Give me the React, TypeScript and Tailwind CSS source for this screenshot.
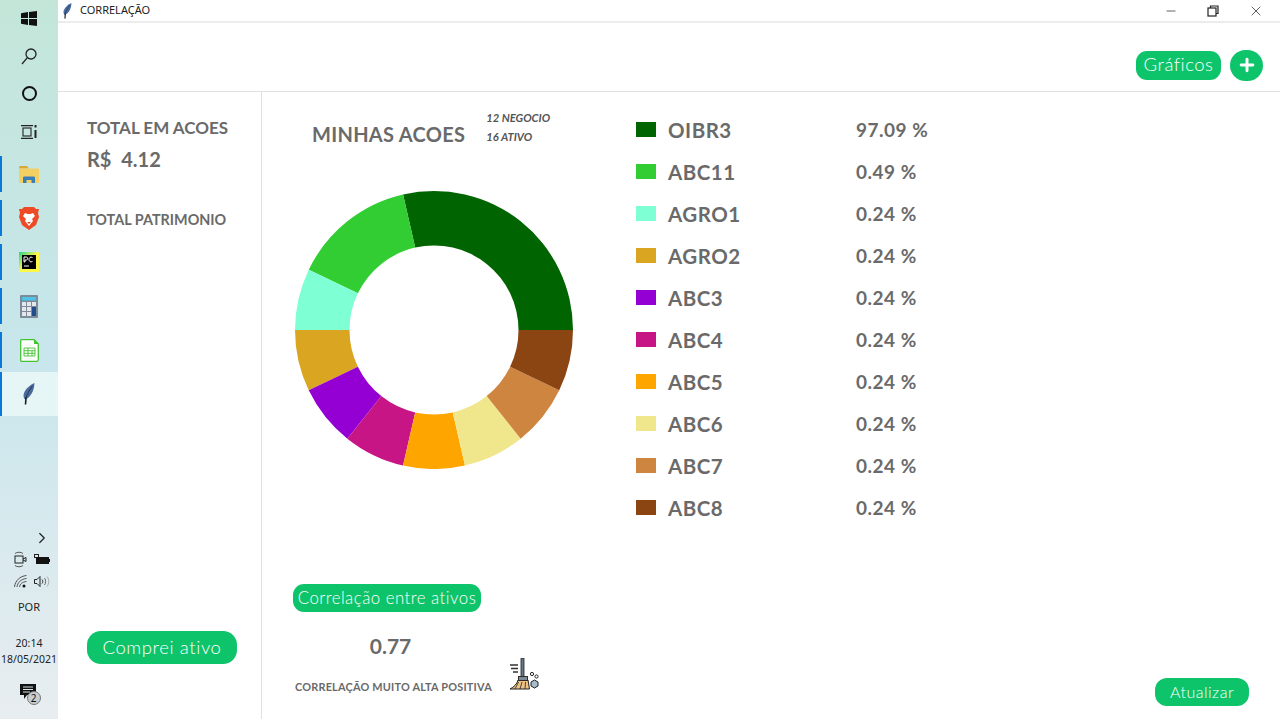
import { ReactNode } from 'react'
import { ChevronRight, Minus, Plus, X } from 'lucide-react'

const stocks = [
  { name: 'OIBR3', pct: '97.09 %', color: '#006400', units: 4 },
  { name: 'ABC11', pct: '0.49 %', color: '#32cd32', units: 2 },
  { name: 'AGRO1', pct: '0.24 %', color: '#7fffd4', units: 1 },
  { name: 'AGRO2', pct: '0.24 %', color: '#daa520', units: 1 },
  { name: 'ABC3', pct: '0.24 %', color: '#9400d3', units: 1 },
  { name: 'ABC4', pct: '0.24 %', color: '#c71585', units: 1 },
  { name: 'ABC5', pct: '0.24 %', color: '#ffa500', units: 1 },
  { name: 'ABC6', pct: '0.24 %', color: '#f0e68c', units: 1 },
  { name: 'ABC7', pct: '0.24 %', color: '#cd853f', units: 1 },
  { name: 'ABC8', pct: '0.24 %', color: '#8b4513', units: 1 },
]

function Feather({ width = 12, height = 22 }: { width?: number; height?: number }) {
  return (
    <svg width={width} height={height} viewBox="0 0 12 22">
      <path d="M11.500 0C7 2 2.500 6 1 10c-.8 2.500-.5 4.500.5 6 1.500.2 3-.5 4.500-2 3-3 5-7 5.500-14z" fill="#4a6a9c" />
      <path d="M9.500 3C6.500 7 4 11 3 15" stroke="#24385c" strokeWidth="1" fill="none" />
      <path d="M3 14.500L2.500 21.500" stroke="#1c1c1c" strokeWidth="1.600" />
    </svg>
  )
}

function WindowsLogo() {
  return (
    <svg width="16" height="15" viewBox="0 0 16 15" fill="#111">
      <path d="M0 2.200L7 1v6H0zM8 .9L16 0v7H8zM0 8h7v6L0 12.800zM8 8h8v7l-8-1z" />
    </svg>
  )
}

function SearchGlass() {
  return (
    <svg width="16" height="17" viewBox="0 0 16 17" fill="none" stroke="#222" strokeWidth="1.300">
      <circle cx="10" cy="6" r="5" />
      <path d="M6.400 9.600L1 16" />
    </svg>
  )
}

function TaskView() {
  return (
    <svg width="17" height="14" viewBox="0 0 17 14" fill="none" stroke="#222" strokeWidth="1.100">
      <path d="M0 .6h12M0 13.400h12" />
      <rect x="2" y="3" width="8" height="8" />
      <path d="M14.500 0v2.500M14.500 5v8" strokeWidth="2" />
    </svg>
  )
}

function FolderIcon() {
  return (
    <svg width="20" height="17" viewBox="0 0 20 17">
      <path d="M0 1.500C0 .7.700 0 1.500 0H8l2 2.500H0z" fill="#d8a63a" />
      <rect x="0" y="2.500" width="20" height="14.500" rx="1" fill="#f4cf63" />
      <path d="M4 17v-5c0-1 .5-1.500 1.500-1.500h9c1 0 1.500.5 1.500 1.500v5h-3.500v-3h-5v3z" fill="#3a7fb8" />
    </svg>
  )
}

function BraveIcon() {
  return (
    <svg width="20" height="23" viewBox="0 0 20 23">
      <path d="M5 0h10l2 2 3 0-1 4 1 4-3 8-7 5-7-5-3-8 1-4-1-4 3 0z" fill="#ee4a25" />
      <path d="M6 6l2.500 1h3L14 6l2 3-3 3 1 2-4 5-4-5 1-2-3-3z" fill="#fff" />
      <path d="M8 15h4l-2 2z" fill="#ee4a25" />
    </svg>
  )
}

function PyCharmIcon() {
  return (
    <svg width="20" height="20" viewBox="0 0 20 20">
      <defs>
        <linearGradient id="pc" x1="0" y1="0" x2="1" y2="1">
          <stop offset="0" stopColor="#21d789" />
          <stop offset="0.5" stopColor="#fcf84a" />
          <stop offset="1" stopColor="#fcf84a" />
        </linearGradient>
      </defs>
      <rect width="20" height="20" fill="url(#pc)" />
      <rect x="3" y="3" width="14" height="14" fill="#000" />
      <path d="M5 5h2.500c1.500 0 1.500 3 0 3H6v2H5zM13.500 5.500c-2-1-3.500 0-3.500 2s1.500 3 3.500 2" stroke="#fff" fill="none" strokeWidth="1" />
      <path d="M5 14h5" stroke="#fff" strokeWidth="1" />
    </svg>
  )
}

function CalculatorIcon() {
  return (
    <svg width="18" height="23" viewBox="0 0 18 23">
      <rect width="18" height="23" rx="1" fill="#7d8a99" />
      <rect x="2" y="2" width="14" height="3.500" fill="#4fc3e8" />
      <g fill="#e4e8ec">
        <rect x="2" y="7" width="4" height="4" />
        <rect x="7" y="7" width="4" height="4" />
        <rect x="12" y="7" width="4" height="4" />
        <rect x="2" y="12" width="4" height="4" />
        <rect x="7" y="12" width="4" height="4" />
        <rect x="2" y="17" width="4" height="4" />
        <rect x="7" y="17" width="4" height="4" />
      </g>
      <rect x="12" y="12" width="4" height="9" fill="#1f4e8c" />
    </svg>
  )
}

function CalcDocIcon() {
  return (
    <svg width="19" height="23" viewBox="0 0 19 23">
      <path d="M1.500.7H14L18.300 5v15.800c0 .8-.7 1.500-1.500 1.500H1.500C.7 22.300.7 21.500.7 20.800V2C.7 1.300.7.700 1.500.7z" fill="#fff" stroke="#43c330" strokeWidth="1.300" />
      <path d="M14 0l5 5h-5z" fill="#43c330" />
      <path d="M4 9h11v8H4zM4 11.700h11M4 14.300h11M8 9v8M12 11.700v5.300" stroke="#43c330" fill="none" strokeWidth="0.900" />
    </svg>
  )
}

function NotificationIcon() {
  return (
    <div className="relative h-[16px] w-[16px]">
      <svg width="16" height="16" viewBox="0 0 16 16">
        <path d="M0 0h16v11H7l-3 4v-4H0z" fill="#111" />
        <path d="M3 3h10M3 5.500h10M3 8h7" stroke="#d8e4e6" strokeWidth="1" />
      </svg>
      <div className="absolute left-[7px] top-[7px] flex h-[14px] w-[14px] items-center justify-center rounded-full border border-[#777] bg-[#c9cdd0] text-[10px] text-[#111]">
        2
      </div>
    </div>
  )
}

function BroomIcon() {
  return (
    <svg width="32" height="32" viewBox="0 0 32 32">
      <rect x="13" y="0" width="3" height="19" fill="#66788a" stroke="#222" strokeWidth="0.800" />
      <path d="M2 7h8M3 10.500h7M5 14h5" stroke="#333" strokeWidth="1.300" />
      <path d="M10 22h10l1.500 9H2c4-2 7-5 8-9z" fill="#eec283" stroke="#222" strokeWidth="1" />
      <path d="M7 31l3.500-7M12 31l2-7M17 31l.5-7" stroke="#222" strokeWidth="0.800" />
      <rect x="10.500" y="18.500" width="9" height="4" fill="#7d8b99" stroke="#222" strokeWidth="0.900" />
      <circle cx="24" cy="16" r="1.600" fill="none" stroke="#222" strokeWidth="1" />
      <circle cx="28.500" cy="18.500" r="1.600" fill="none" stroke="#222" strokeWidth="1" />
      <path d="M23 24l3.500-2 3.500 2v4l-3.500 2-3.500-2z" fill="#a9bccb" stroke="#222" strokeWidth="1" />
    </svg>
  )
}

function TrayCamera() {
  return (
    <svg width="13" height="17" viewBox="0 0 13 17" fill="none" stroke="#222" strokeWidth="1">
      <path d="M1 2.500C3 .8 7 .8 9 2.500M1 14.500c2 1.700 6 1.700 8 0" stroke="#555" />
      <rect x="1" y="5" width="8" height="7" />
      <path d="M9 8l3-1.500v4L9 9" />
    </svg>
  )
}

function TrayBattery() {
  return (
    <svg width="16" height="11" viewBox="0 0 16 11">
      <rect x="0.500" y="0.500" width="4" height="3" fill="none" stroke="#222" />
      <rect x="2" y="3" width="13" height="7" fill="#111" />
      <rect x="15" y="5" width="1" height="3" fill="#111" />
    </svg>
  )
}

function TrayWifi() {
  return (
    <svg width="13" height="13" viewBox="0 0 13 13" fill="none" stroke="#444" strokeWidth="0.900">
      <path d="M.5 12C1 6 6 1 12.500.5M3 12c.5-4.500 4-8 9.500-8.500M5.500 12c.5-3 2.500-5 7-5.500" />
      <circle cx="10" cy="11" r="1.500" fill="#111" stroke="none" />
    </svg>
  )
}

function TraySpeaker() {
  return (
    <svg width="16" height="13" viewBox="0 0 16 13" fill="none" stroke="#222" strokeWidth="1">
      <path d="M.5 4.500h2.500L6 1.500v10l-3-3H.5z" />
      <path d="M8 4.500c1 1 1 3 0 4" />
      <path d="M10.500 3c1.500 2 1.500 5 0 7" stroke="#666" />
      <path d="M13 1.500c2.300 3 2.300 7 0 10" stroke="#aaa" />
    </svg>
  )
}

function AppSlot({ children, active }: { children: ReactNode; active?: boolean }) {
  return (
    <div className={active ? 'flex h-[44px] bg-[#e6f5f6]' : 'flex h-[44px] py-[4px]'}>
      <div className="w-[2px] bg-[#0a78d7]" />
      <div className="flex flex-1 items-center justify-center pr-[2px]">{children}</div>
    </div>
  )
}

function Sidebar() {
  return (
    <div className="flex h-full w-[58px] shrink-0 flex-col bg-gradient-to-b from-[#c3e6d9] via-[#c8e6ec] to-[#e8edf0]">
      <div className="flex h-[37px] items-center justify-center"><WindowsLogo /></div>
      <div className="flex h-[39px] items-center justify-center"><SearchGlass /></div>
      <div className="flex h-[35px] items-center justify-center">
        <div className="h-[15px] w-[15px] rounded-full border-[2.5px] border-[#111]" />
      </div>
      <div className="flex h-[41px] items-center justify-center"><TaskView /></div>
      <AppSlot><FolderIcon /></AppSlot>
      <AppSlot><BraveIcon /></AppSlot>
      <AppSlot><PyCharmIcon /></AppSlot>
      <AppSlot><CalculatorIcon /></AppSlot>
      <AppSlot><CalcDocIcon /></AppSlot>
      <AppSlot active><Feather /></AppSlot>

      <div className="mt-auto flex flex-col items-center font-['Noto_Sans',sans-serif] text-[#222]">
        <div className="flex w-full justify-end pr-[7px]">
          <ChevronRight size={18} strokeWidth={1.6} color="#222" />
        </div>
        <div className="mt-[4px] grid grid-cols-2 items-center justify-items-center gap-x-[6px] gap-y-[7px] pl-[4px]">
          <TrayCamera />
          <TrayBattery />
          <TrayWifi />
          <TraySpeaker />
        </div>
        <div className="mt-[11px] text-[11px] leading-[16px]">POR</div>
        <div className="mt-[20px] text-[10.500px] leading-[16px]">20:14</div>
        <div className="text-[10.500px] leading-[16px]">18/05/2021</div>
        <div className="mb-[19px] mt-[17px] flex w-full justify-center pr-[3px]"><NotificationIcon /></div>
      </div>
    </div>
  )
}

function TitleBar() {
  return (
    <div className="flex h-[23px] shrink-0 items-center border-b-2 border-[#ececec]">
      <div className="ml-[5px] flex w-[11px] items-center"><Feather width={9} height={16} /></div>
      <div className="ml-[6px] font-['Noto_Sans',sans-serif] text-[11px] text-[#222]">CORRELAÇÃO</div>
      <div className="ml-auto flex items-center gap-[29px] pr-[16px] text-[#222]">
        <Minus size={14} strokeWidth={1.2} />
        <svg width="12" height="12" viewBox="0 0 12 12" fill="none" stroke="#222" strokeWidth="1.200">
          <rect x="1" y="3" width="8" height="8" />
          <path d="M3.500 3V1h7.500v7.500H9" />
        </svg>
        <X size={16} strokeWidth={1.1} />
      </div>
    </div>
  )
}

function GreenButton({ children, className }: { children: ReactNode; className: string }) {
  return (
    <div className={`flex items-center justify-center bg-[#0ec46b] font-['Lato',sans-serif] font-light text-white ${className}`}>
      {children}
    </div>
  )
}

function polar(angle: number, r: number) {
  const a = (angle * Math.PI) / 180
  return [139 + r * Math.cos(a), 139 - r * Math.sin(a)]
}

function Donut() {
  const total = stocks.reduce((sum, s) => sum + s.units, 0)
  let start = 0
  return (
    <svg width="278" height="278" viewBox="0 0 278 278">
      {stocks.map((s) => {
        const end = start + (s.units / total) * 360
        const [x1, y1] = polar(start, 139)
        const [x2, y2] = polar(end, 139)
        const [x3, y3] = polar(end, 84.500)
        const [x4, y4] = polar(start, 84.500)
        start = end
        return (
          <path
            key={s.name}
            fill={s.color}
            d={`M${x1} ${y1}A139 139 0 0 0 ${x2} ${y2}L${x3} ${y3}A84.500 84.500 0 0 1 ${x4} ${y4}Z`}
          />
        )
      })}
    </svg>
  )
}

export default function App() {
  return (
    <div className="flex h-[719px] w-[1280px] overflow-hidden bg-white font-['Lato',sans-serif] text-[#6a6a6a]">
      <Sidebar />
      <div className="flex min-w-0 flex-1 flex-col">
        <TitleBar />
        <div className="flex h-[69px] shrink-0 items-center justify-end gap-[9px] border-b border-[#e0e0e0] pr-[17px] pt-[16px]">
          <GreenButton className="h-[29px] w-[85px] rounded-[11px] text-[18.500px] tracking-[0.5px]">Gráficos</GreenButton>
          <div className="flex h-[31px] w-[33px] items-center justify-center rounded-full bg-[#0ec46b] text-white">
            <Plus size={20} strokeWidth={3.5} />
          </div>
        </div>

        <div className="flex min-h-0 flex-1">
          <aside className="flex w-[204px] shrink-0 flex-col border-r border-[#e0e0e0] pb-[55px] pl-[29px] pt-[25px]">
            <div className="text-[17px] font-bold leading-[22px]">TOTAL EM ACOES</div>
            <div className="mt-[7px] text-[20px] font-bold leading-[26px]">R$&nbsp;&nbsp;4.12</div>
            <div className="mt-[38px] text-[14.400px] font-bold leading-[20px]">TOTAL PATRIMONIO</div>
            <GreenButton className="mt-auto h-[33px] w-[150px] rounded-[14px] text-[18.500px] tracking-[0.6px]">Comprei ativo</GreenButton>
          </aside>

          <section className="flex min-w-0 flex-1 flex-col">
            <div className="flex">
              <div className="w-[374px] shrink-0 pl-[33px]">
                <div className="flex items-start pl-[17px] pt-[16px]">
                  <div className="mt-[12px] text-[20px] font-bold leading-[28px] tracking-[0.3px]">MINHAS ACOES</div>
                  <div className="ml-[21px] text-[11.200px] font-bold italic leading-[19px] text-[#555]">
                    <div>12 NEGOCIO</div>
                    <div>16 ATIVO</div>
                  </div>
                </div>
                <div className="mt-[43px]"><Donut /></div>
              </div>

              <div className="flex flex-col pt-[16px]">
                {stocks.map((s) => (
                  <div key={s.name} className="flex h-[42px] items-center">
                    <div className="h-[15px] w-[20px]" style={{ backgroundColor: s.color }} />
                    <div className="ml-[12px] w-[188px] pt-[2px] text-[20.500px] font-bold tracking-[0.5px]">{s.name}</div>
                    <div className="pt-[2px] text-[19px] font-bold tracking-[0.5px]">{s.pct}</div>
                  </div>
                ))}
              </div>
            </div>

            <div className="mt-auto flex items-end justify-between pb-[13px] pl-[31px] pr-[31px]">
              <div className="mb-[16px] flex flex-col">
                <GreenButton className="h-[28px] w-[188px] rounded-[11px] text-[16.800px] tracking-[0.5px]">Correlação entre ativos</GreenButton>
                <div className="mb-[-2px] mt-[21px] w-[195px] text-center text-[21px] font-bold leading-[26px]">0.77</div>
                <div className="flex items-end">
                  <div className="mb-[-5px] ml-[2px] text-[10.900px] font-bold leading-[16px] tracking-[0.2px]">CORRELAÇÃO MUITO ALTA POSITIVA</div>
                  <div className="ml-[16px] mt-[1px]"><BroomIcon /></div>
                </div>
              </div>
              <GreenButton className="h-[28px] w-[94px] rounded-[12px] text-[16px] tracking-[0.5px]">Atualizar</GreenButton>
            </div>
          </section>
        </div>
      </div>
    </div>
  )
}
